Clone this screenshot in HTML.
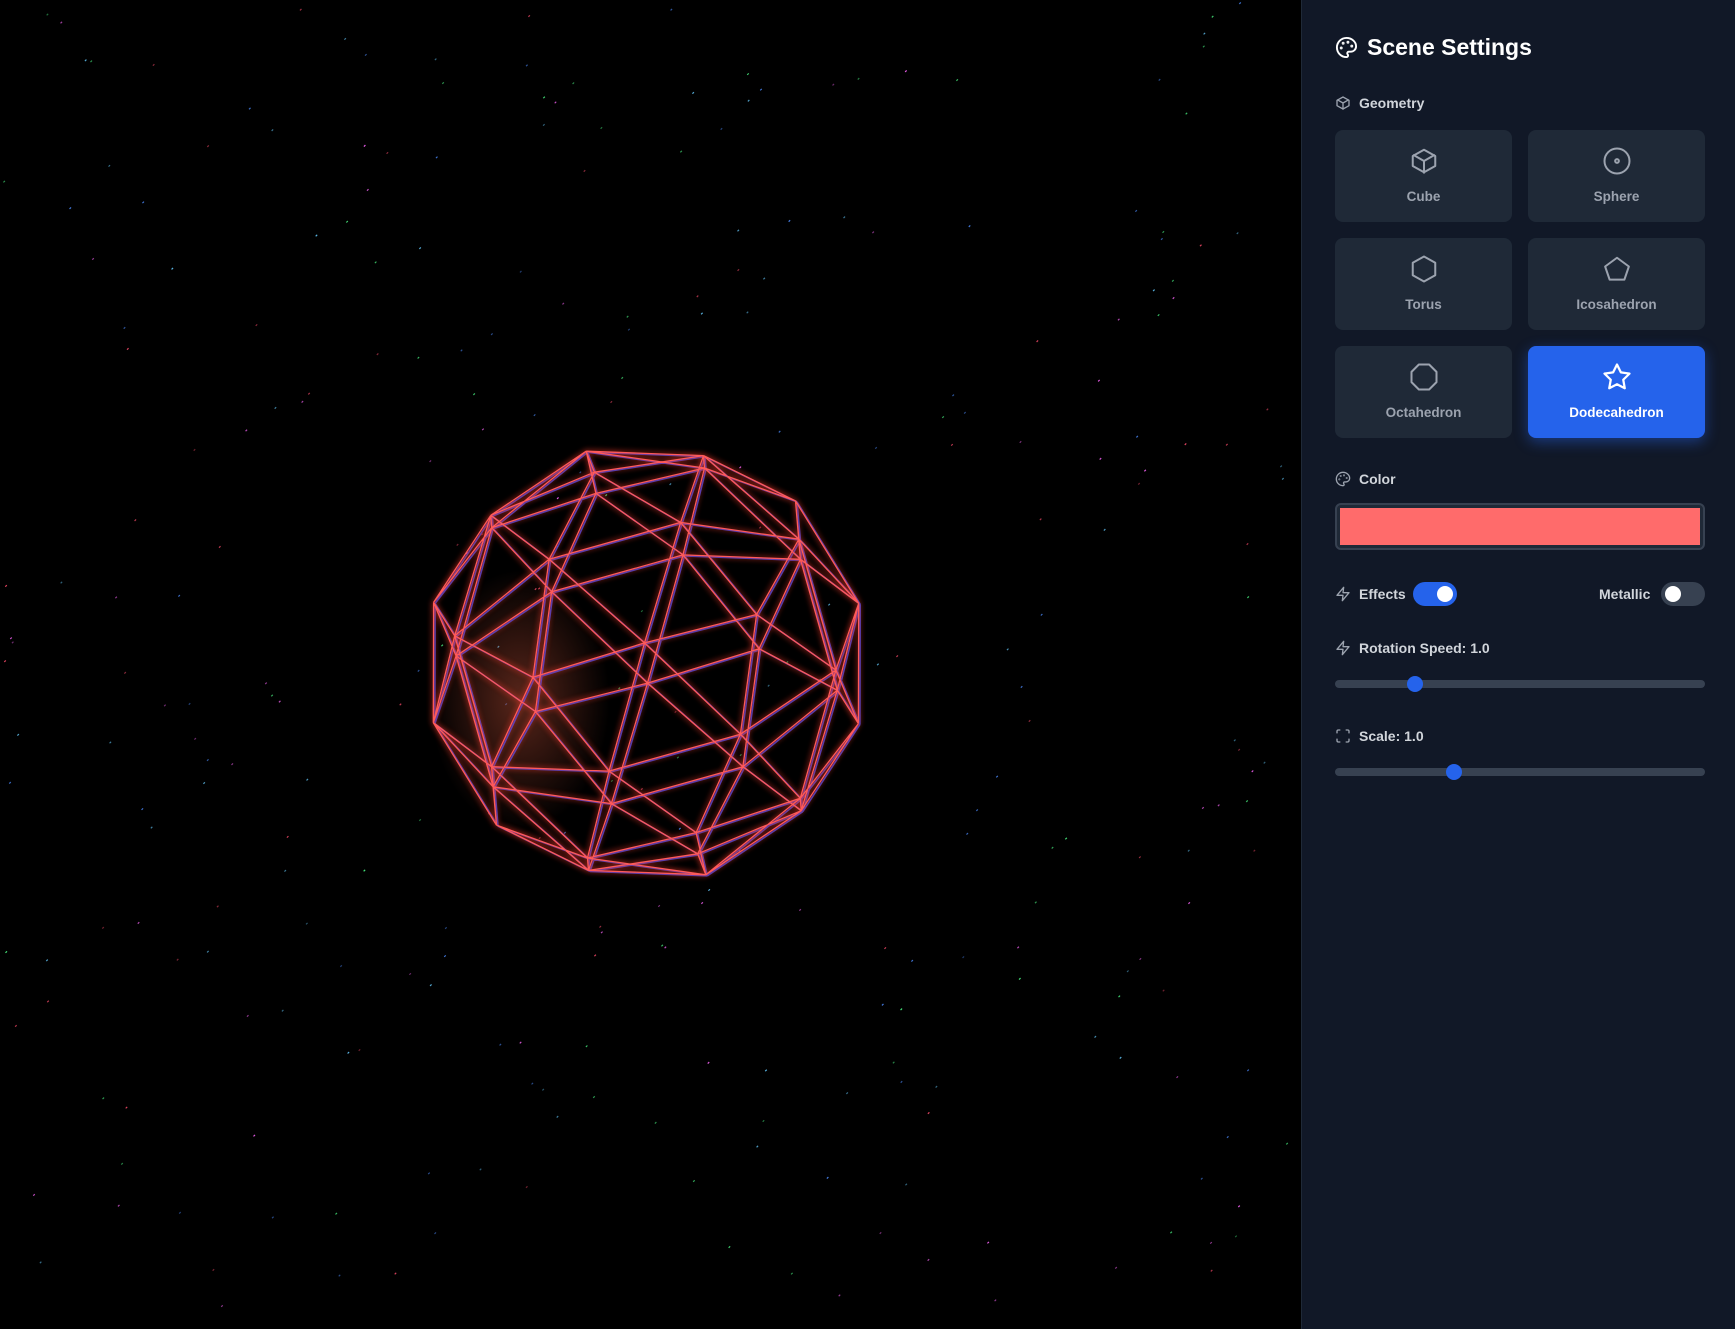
<!DOCTYPE html>
<html><head><meta charset="utf-8"><style>
*{box-sizing:border-box;margin:0;padding:0}
html,body{width:1735px;height:1329px;overflow:hidden;background:#000;font-family:"Liberation Sans",sans-serif}
#scene{position:absolute;left:0;top:0;width:1301px;height:1329px;background:#000}
#panel{position:absolute;left:1301px;top:0;width:434px;height:1329px;background:#111827;border-left:1px solid #1f2937}
.ab{position:absolute}
.title{left:33px;top:34px;display:flex;align-items:center;gap:9px;color:#fff;font-size:23px;font-weight:bold}
.lbl{display:flex;align-items:center;gap:8px;color:#d1d5db;font-size:14px;font-weight:bold}
.btn{position:absolute;width:177px;height:92px;background:#1f2937;border-radius:8px;color:#9ca3af;font-size:13.5px;font-weight:bold;text-align:center}
.btn svg{position:absolute;left:74px;top:16px}
.btn span{position:absolute;left:0;right:0;top:59px}
.btn.on{background:#2563eb;color:#fff;box-shadow:0 4px 14px rgba(37,99,235,.45)}
.tog{position:absolute;width:44px;height:24px;border-radius:12px}
.tog i{position:absolute;top:4px;width:16px;height:16px;border-radius:50%;background:#fff}
.track{position:absolute;left:33px;width:370px;height:8px;border-radius:4px;background:#374151}
.thumb{position:absolute;top:-4px;width:16px;height:16px;border-radius:50%;background:#2563eb}
</style></head><body>
<svg id="scene" width="1301" height="1329" viewBox="0 0 1301 1329">
<defs><filter id="gl" x="-20%" y="-20%" width="140%" height="140%"><feGaussianBlur stdDeviation="3"/></filter>
<radialGradient id="hz" cx="0.5" cy="0.5" r="0.5"><stop offset="0" stop-color="#ff6b4b" stop-opacity=".35"/><stop offset="1" stop-color="#ff6b4b" stop-opacity="0"/></radialGradient></defs>
<g id="stars"></g>
<ellipse cx="520" cy="700" rx="90" ry="130" fill="url(#hz)"/>
<g id="blue" stroke="#3b4cff" stroke-width="1.6" fill="none" opacity=".8" transform="translate(1.5,1)"></g>
<g id="glow" stroke="#ff3b2b" stroke-width="3" fill="none" opacity=".6" filter="url(#gl)"></g>
<g id="red" stroke="#ff5a5a" stroke-width="1.3" fill="none"></g>
</svg>
<div id="panel">
 <div class="ab title"><svg width="23" height="23" viewBox="0 0 24 24" fill="none" stroke="#fff" stroke-width="2" stroke-linecap="round" stroke-linejoin="round"><circle cx="13.5" cy="6.5" r=".5" fill="#fff"/><circle cx="17.5" cy="10.5" r=".5" fill="#fff"/><circle cx="8.5" cy="7.5" r=".5" fill="#fff"/><circle cx="6.5" cy="12.5" r=".5" fill="#fff"/><path d="M12 2C6.5 2 2 6.5 2 12s4.5 10 10 10c.93 0 1.65-.75 1.65-1.69 0-.44-.18-.84-.44-1.13-.29-.29-.44-.65-.44-1.13a1.64 1.64 0 0 1 1.67-1.67h2c3.050 0 5.55-2.5 5.55-5.55C21.97 6.01 17.46 2 12 2z"/></svg>Scene Settings</div>
 <div class="ab lbl" style="left:33px;top:95px"><svg width="16" height="16" viewBox="0 0 24 24" fill="none" stroke="#9ca3af" stroke-width="2" stroke-linejoin="round"><path d="M21 16V8l-9-5-9 5v8l9 5 9-5z"/><path d="M3.3 7L12 12l8.7-5M12 22V12"/></svg>Geometry</div>
 <div class="btn" style="left:33px;top:130px"><svg width="30" height="30" viewBox="0 0 24 24" fill="none" stroke="#9ca3af" stroke-width="1.6" stroke-linejoin="round"><path d="M21 16V8l-9-5-9 5v8l9 5 9-5z"/><path d="M3.3 7L12 12l8.7-5M12 22V12"/></svg><span>Cube</span></div>
 <div class="btn" style="left:226px;top:130px"><svg width="30" height="30" viewBox="0 0 24 24" fill="none" stroke="#9ca3af" stroke-width="1.6"><circle cx="12" cy="12" r="10"/><circle cx="12" cy="12" r="1.5"/></svg><span>Sphere</span></div>
 <div class="btn" style="left:33px;top:238px"><svg width="30" height="30" viewBox="0 0 24 24" fill="none" stroke="#9ca3af" stroke-width="1.6" stroke-linejoin="round"><path d="M12 2l9 5v10l-9 5-9-5V7z"/></svg><span>Torus</span></div>
 <div class="btn" style="left:226px;top:238px"><svg width="30" height="30" viewBox="0 0 24 24" fill="none" stroke="#9ca3af" stroke-width="1.6" stroke-linejoin="round"><path d="M12 3l9.5 7-3.6 10.5H6.1L2.5 10z"/></svg><span>Icosahedron</span></div>
 <div class="btn" style="left:33px;top:346px"><svg width="30" height="30" viewBox="0 0 24 24" fill="none" stroke="#9ca3af" stroke-width="1.6" stroke-linejoin="round"><path d="M7.9 2h8.2L22 7.9v8.2L16.1 22H7.9L2 16.1V7.9z"/></svg><span>Octahedron</span></div>
 <div class="btn on" style="left:226px;top:346px"><svg width="30" height="30" viewBox="0 0 24 24" fill="none" stroke="#fff" stroke-width="1.8" stroke-linejoin="round"><path d="M12 2l3.1 6.3 6.9 1-5 4.9 1.2 6.8L12 17.8 5.8 21l1.2-6.8-5-4.9 6.9-1z"/></svg><span>Dodecahedron</span></div>
 <div class="ab lbl" style="left:33px;top:471px"><svg width="16" height="16" viewBox="0 0 24 24" fill="none" stroke="#9ca3af" stroke-width="2"><circle cx="13.5" cy="6.5" r=".5"/><circle cx="17.5" cy="10.5" r=".5"/><circle cx="8.5" cy="7.5" r=".5"/><circle cx="6.5" cy="12.5" r=".5"/><path d="M12 2C6.5 2 2 6.5 2 12s4.5 10 10 10c.93 0 1.65-.75 1.65-1.69 0-.44-.18-.84-.44-1.130-.29-.29-.44-.65-.44-1.13a1.64 1.64 0 0 1 1.67-1.67h2c3.05 0 5.55-2.5 5.55-5.55C21.97 6.01 17.46 2 12 2z"/></svg>Color</div>
 <div class="ab" style="left:33px;top:503px;width:370px;height:47px;border:2px solid #374151;border-radius:6px;background:#1f2937;padding:3px"><div style="width:100%;height:100%;background:#ff6b6b"></div></div>
 <div class="ab lbl" style="left:33px;top:586px"><svg width="16" height="16" viewBox="0 0 24 24" fill="none" stroke="#9ca3af" stroke-width="2" stroke-linejoin="round"><path d="M13 2L3 14h9l-1 8 10-12h-9z"/></svg>Effects</div>
 <div class="tog" style="left:111px;top:582px;background:#2563eb"><i style="left:24px"></i></div>
 <div class="ab lbl" style="left:297px;top:586px">Metallic</div>
 <div class="tog" style="left:359px;top:582px;background:#374151"><i style="left:4px"></i></div>
 <div class="ab lbl" style="left:33px;top:640px"><svg width="16" height="16" viewBox="0 0 24 24" fill="none" stroke="#9ca3af" stroke-width="2" stroke-linejoin="round"><path d="M13 2L3 14h9l-1 8 10-12h-9z"/></svg>Rotation Speed: 1.0</div>
 <div class="track" style="top:680px"><div class="thumb" style="left:72px"></div></div>
 <div class="ab lbl" style="left:33px;top:728px"><svg width="16" height="16" viewBox="0 0 24 24" fill="none" stroke="#9ca3af" stroke-width="2"><path d="M3 8V5a2 2 0 0 1 2-2h3M16 3h3a2 2 0 0 1 2 2v3M21 16v3a2 2 0 0 1-2 2h-3M8 21H5a2 2 0 0 1-2-2v-3"/></svg>Scale: 1.0</div>
 <div class="track" style="top:768px"><div class="thumb" style="left:111px"></div></div>
</div>
<script>
(function(){
var ns="http://www.w3.org/2000/svg";
var s=12345;function r(){s=(s*16807)%2147483647;return s/2147483647;}
var st=document.getElementById('stars'),cols=['#ff4d6d','#4dff88','#4d8cff','#ff66ff','#66ccff'];
for(var i=0;i<300;i++){var x=r()*1301,y=r()*1329,l=document.createElementNS(ns,'line');
l.setAttribute('x1',x);l.setAttribute('y1',y);l.setAttribute('x2',x+1.5);l.setAttribute('y2',y-1.5);
l.setAttribute('stroke',cols[i%5]);l.setAttribute('stroke-width','1.2');l.setAttribute('opacity',.4+r()*.5);st.appendChild(l);}
var t=(1+Math.sqrt(5))/2;
var v=[[-1,t,0],[1,t,0],[-1,-t,0],[1,-t,0],[0,-1,t],[0,1,t],[0,-1,-t],[0,1,-t],[t,0,-1],[t,0,1],[-t,0,-1],[-t,0,1]];
var f=[[0,11,5],[0,5,1],[0,1,7],[0,7,10],[0,10,11],[1,5,9],[5,11,4],[11,10,2],[10,7,6],[7,1,8],[3,9,4],[3,4,2],[3,2,6],[3,6,8],[3,8,9],[4,9,5],[2,4,11],[6,2,10],[8,6,7],[9,8,1]];
function n(p){var m=Math.hypot(p[0],p[1],p[2]);return[p[0]/m,p[1]/m,p[2]/m];}
v=v.map(n);var cache={};
function mid(a,b){var k=a<b?a+'_'+b:b+'_'+a;if(cache[k]!=null)return cache[k];v.push(n([(v[a][0]+v[b][0])/2,(v[a][1]+v[b][1])/2,(v[a][2]+v[b][2])/2]));return cache[k]=v.length-1;}
var nf=[];f.forEach(function(q){var a=mid(q[0],q[1]),b=mid(q[1],q[2]),c=mid(q[2],q[0]);nf.push([q[0],a,c],[q[1],b,a],[q[2],c,b],[a,b,c]);});
var E={};nf.forEach(function(q){for(var j=0;j<3;j++){var a=q[j],b=q[(j+1)%3];E[a<b?a+'_'+b:b+'_'+a]=[a,b];}});
var ax=0.95,ay=0.38,az=0.72;
function rot(p){var x=p[0],y=p[1],z=p[2],c=Math.cos(ax),s2=Math.sin(ax);var y1=y*c-z*s2,z1=y*s2+z*c;c=Math.cos(ay);s2=Math.sin(ay);var x2=x*c+z1*s2,z2=-x*s2+z1*c;c=Math.cos(az);s2=Math.sin(az);return[x2*c-y1*s2,x2*s2+y1*c,z2];}
var P=v.map(function(p){var q=rot(p);return[646+q[0]*221,663+q[1]*221];});
var gs=['blue','glow','red'].map(function(id){return document.getElementById(id);});
var d='';for(var k in E){var e=E[k];d+='M'+P[e[0]][0].toFixed(1)+' '+P[e[0]][1].toFixed(1)+'L'+P[e[1]][0].toFixed(1)+' '+P[e[1]][1].toFixed(1);}
gs.forEach(function(g){var p=document.createElementNS(ns,'path');p.setAttribute('d',d);g.appendChild(p);});
})();
</script>
</body></html>
